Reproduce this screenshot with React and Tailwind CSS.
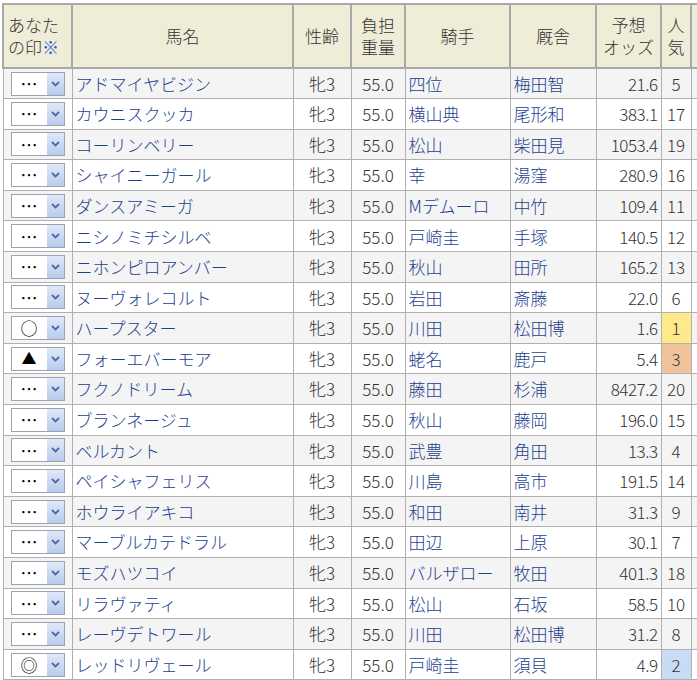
import React from 'react';

const rows = [
	['…', 'アドマイヤビジン', '四位', '梅田智', '21.6', '5'],
	['…', 'カウニスクッカ', '横山典', '尾形和', '383.1', '17'],
	['…', 'コーリンベリー', '松山', '柴田見', '1053.4', '19'],
	['…', 'シャイニーガール', '幸', '湯窪', '280.9', '16'],
	['…', 'ダンスアミーガ', 'Mデムーロ', '中竹', '109.4', '11'],
	['…', 'ニシノミチシルベ', '戸崎圭', '手塚', '140.5', '12'],
	['…', 'ニホンピロアンバー', '秋山', '田所', '165.2', '13'],
	['…', 'ヌーヴォレコルト', '岩田', '斎藤', '22.0', '6'],
	['○', 'ハープスター', '川田', '松田博', '1.6', '1'],
	['▲', 'フォーエバーモア', '蛯名', '鹿戸', '5.4', '3'],
	['…', 'フクノドリーム', '藤田', '杉浦', '8427.2', '20'],
	['…', 'ブランネージュ', '秋山', '藤岡', '196.0', '15'],
	['…', 'ベルカント', '武豊', '角田', '13.3', '4'],
	['…', 'ペイシャフェリス', '川島', '高市', '191.5', '14'],
	['…', 'ホウライアキコ', '和田', '南井', '31.3', '9'],
	['…', 'マーブルカテドラル', '田辺', '上原', '30.1', '7'],
	['…', 'モズハツコイ', 'バルザロー', '牧田', '401.3', '18'],
	['…', 'リラヴァティ', '松山', '石坂', '58.5', '10'],
	['…', 'レーヴデトワール', '川田', '松田博', '31.2', '8'],
	['◎', 'レッドリヴェール', '戸崎圭', '須貝', '4.9', '2'],
];

const popBg = { '1': 'bg-[#ffe98a]', '3': 'bg-[#f1c39c]', '2': 'bg-[#c9dcf5]' };

const Mark = ({ mark }) => (
	<div className="mx-auto flex h-[24px] w-[54px] items-center border border-[#9aa3b0] bg-white">
		<span className={`flex-1 text-center font-normal text-black ${mark === '▲' ? 'text-[15px]' : 'text-[17px]'}`}>{mark}</span>
		<span className="flex h-full w-[17px] items-center justify-center bg-gradient-to-b from-[#dfe8f8] to-[#b9cbec]">
			<svg width="9" height="6" viewBox="0 0 9 6"><path d="M1 1 L4.5 4.5 L8 1" stroke="#4a6aa8" strokeWidth="1.8" fill="none" /></svg>
		</span>
	</div>
);

const th = 'border-2 border-[#a9a9a9] bg-[#efecd8] font-light text-[#333] leading-[22px]';
const td = 'border border-[#b0b0b0] px-[3px]';

export default function App() {
	return (
		<div className="bg-white pl-[2px] pt-[3px]" style={{ fontFamily: '"Noto Sans CJK JP", "Noto Sans", sans-serif' }}>
			<table className="border-collapse text-[17px] font-light text-[#333]" style={{ tableLayout: 'fixed', width: 720 }}>
				<colgroup>
					<col style={{ width: 69 }} />
					<col style={{ width: 221 }} />
					<col style={{ width: 58 }} />
					<col style={{ width: 54 }} />
					<col style={{ width: 105 }} />
					<col style={{ width: 86 }} />
					<col style={{ width: 65 }} />
					<col style={{ width: 30 }} />
					<col style={{ width: 32 }} />
				</colgroup>
				<thead>
					<tr className="h-[64px]">
						<th className={`${th} text-left px-[4px]`}>あなた<br />の印<span className="text-[#2a5bd7]">※</span></th>
						<th className={th}>馬名</th>
						<th className={th}>性齢</th>
						<th className={th}>負担<br />重量</th>
						<th className={th}>騎手</th>
						<th className={th}>厩舎</th>
						<th className={th}>予想<br />オッズ</th>
						<th className={th}>人<br />気</th>
						<th className={th}></th>
					</tr>
				</thead>
				<tbody>
					{rows.map((r, i) => {
						const bg = i % 2 === 0 ? 'bg-[#f4f4f4]' : 'bg-white';
						return (
							<tr key={i} className={`h-[30.6px] ${bg}`}>
								<td className={td}><Mark mark={r[0]} /></td>
								<td className={`${td} text-[#1d3f8f]`}>{r[1]}</td>
								<td className={`${td} text-center`}>牝3</td>
								<td className={`${td} text-center`}>55.0</td>
								<td className={`${td} text-[#1d3f8f] whitespace-nowrap overflow-hidden`}>{r[2]}</td>
								<td className={`${td} text-[#1d3f8f]`}>{r[3]}</td>
								<td className={`${td} text-right tracking-[-0.5px]`}>{r[4]}</td>
								<td className={`${td} text-center ${popBg[r[5]] || ''}`}>{r[5]}</td>
								<td className={td}></td>
							</tr>
						);
					})}
				</tbody>
			</table>
		</div>
	);
}
